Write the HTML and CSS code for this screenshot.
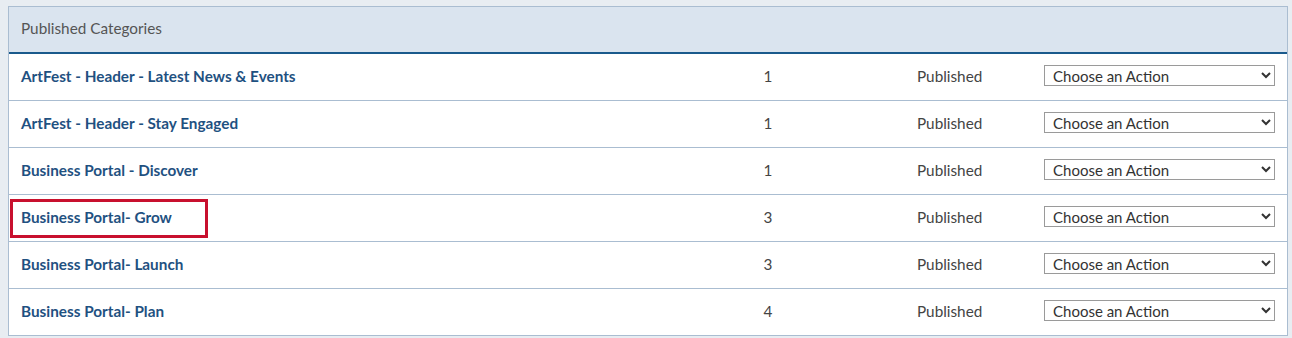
FILE: index.html
```html
<!DOCTYPE html>
<html lang="en">
<head>
    <meta charset="UTF-8">
    <title>Published Categories</title>
    <link rel="stylesheet" href="styles.css">
</head>
<body>
    <div class="panel">
        <div class="panel-header">Published Categories</div>

        <div class="cat-row">
            <a class="cat-name" href="#">ArtFest - Header - Latest News &amp; Events</a>
            <span class="cat-count">1</span>
            <span class="cat-status">Published</span>
            <select class="cat-action"><option>Choose an Action</option></select>
        </div>
        <div class="cat-row">
            <a class="cat-name" href="#">ArtFest - Header - Stay Engaged</a>
            <span class="cat-count">1</span>
            <span class="cat-status">Published</span>
            <select class="cat-action"><option>Choose an Action</option></select>
        </div>
        <div class="cat-row">
            <a class="cat-name" href="#">Business Portal - Discover</a>
            <span class="cat-count">1</span>
            <span class="cat-status">Published</span>
            <select class="cat-action"><option>Choose an Action</option></select>
        </div>
        <div class="cat-row">
            <a class="cat-name" href="#">Business Portal- Grow</a>
            <span class="highlight"></span>
            <span class="cat-count">3</span>
            <span class="cat-status">Published</span>
            <select class="cat-action"><option>Choose an Action</option></select>
        </div>
        <div class="cat-row">
            <a class="cat-name" href="#">Business Portal- Launch</a>
            <span class="cat-count">3</span>
            <span class="cat-status">Published</span>
            <select class="cat-action"><option>Choose an Action</option></select>
        </div>
        <div class="cat-row">
            <a class="cat-name" href="#">Business Portal- Plan</a>
            <span class="cat-count">4</span>
            <span class="cat-status">Published</span>
            <select class="cat-action"><option>Choose an Action</option></select>
        </div>
    </div>
</body>
</html>
```

FILE: styles.css
```css
body {
    margin: 6px 0 0 8px;
    background: #e8edf2;
    font-family: Lato, "Open Sans", sans-serif;
    font-size: 15.3px;
    color: #444;
}
.panel {
    width: 1278px;
    background: #fff;
    border: 1px solid #aabdd1;
    border-bottom: none;
}
.panel-header {
    height: 45px;
    line-height: 42px;
    padding: 0 12px;
    background: #dae4ef;
    border-bottom: 2px solid #1a5a8c;
    color: #555;
}
.cat-row {
    position: relative;
    display: grid;
    grid-template-columns: 717px 60px 246px 231px;
    align-items: center;
    height: 43px;
    padding: 0 12px 3px;
    border-bottom: 1px solid #aabdd1;
}
.cat-name {
    color: #1f5181;
    font-weight: bold;
    text-decoration: none;
}
.cat-count {
    text-align: center;
}
.cat-status {
    padding-left: 119px;
}
.cat-action {
    height: 21px;
    padding: 0 4px;
    border: 1px solid #9a9a9a;
    border-radius: 0;
    background: #fff;
    color: #333;
    font-family: inherit;
    font-size: 15px;
}
.highlight {
    position: absolute;
    left: 1px;
    top: 4px;
    width: 192px;
    height: 33px;
    border: 3px solid #c8102e;
}
```
